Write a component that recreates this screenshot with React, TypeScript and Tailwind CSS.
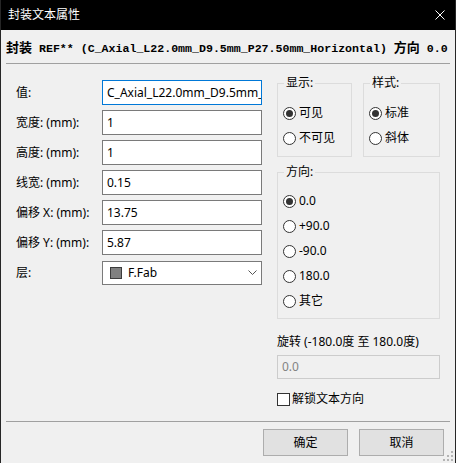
import type { ReactNode } from "react";

const uiFont = "font-['Noto_Sans','Noto_Sans_CJK_SC',sans-serif]";

const fields = [
  { label: "宽度: (mm):", value: "1" },
  { label: "高度: (mm):", value: "1" },
  { label: "线宽: (mm):", value: "0.15" },
  { label: "偏移 X: (mm):", value: "13.75" },
  { label: "偏移 Y: (mm):", value: "5.87" },
];

function Radio({ label, checked }: { label: string; checked?: boolean }) {
  return (
    <div className="flex h-4 items-center gap-[3px]">
      <span className="flex size-[13px] items-center justify-center rounded-full border border-[#333333] bg-white">
        {checked ? <span className="size-[7px] rounded-full bg-[#333333]" /> : null}
      </span>
      <span className="leading-4">{label}</span>
    </div>
  );
}

function Group({
  title,
  className,
  children,
}: {
  title: string;
  className: string;
  children: ReactNode;
}) {
  return (
    <div className={`relative border border-[#dcdcdc] ${className}`}>
      <span className="absolute -top-[9px] left-[6px] bg-[#f0f0f0] px-[2px] leading-4">
        {title}
      </span>
      {children}
    </div>
  );
}

function Field({ label, children }: { label: string; children: ReactNode }) {
  return (
    <div className="flex h-[25px] items-center">
      <span className="w-[86px] shrink-0 leading-4">{label}</span>
      {children}
    </div>
  );
}

function TextBox({ value, focused }: { value: string; focused?: boolean }) {
  return (
    <div
      className={`flex h-[25px] w-[160px] items-center overflow-hidden whitespace-nowrap border bg-white px-[4px] ${
        focused ? "border-[#0078d7]" : "border-[#7a7a7a]"
      }`}
    >
      {value}
    </div>
  );
}

function Button({ label }: { label: string }) {
  return (
    <button className="flex h-[27px] w-[85px] items-center justify-center border border-[#adadad] bg-[#e1e1e1]">
      {label}
    </button>
  );
}

export default function App() {
  return (
    <div
      className={`relative flex h-[463px] w-[456px] flex-col border-x border-[#262626] bg-[#f0f0f0] text-[12px] text-black ${uiFont}`}
    >
      {/* title bar */}
      <div className="flex h-[30px] shrink-0 items-center justify-between bg-black pl-[7px] pr-[10px] text-white">
        <span className="leading-4">封装文本属性</span>
        <svg width="10" height="10" viewBox="0 0 10 10" aria-hidden="true">
          <path d="M0.5 0.5 L9.5 9.5 M9.5 0.5 L0.5 9.5" stroke="white" strokeWidth="1" />
        </svg>
      </div>

      {/* footprint summary */}
      <div className="h-[33px] shrink-0 whitespace-pre pl-[5px] font-bold leading-[33px]">
        <span className="font-['Noto_Sans_CJK_SC',sans-serif] text-[13px]">封装</span>
        <span className="font-['Liberation_Mono',monospace] text-[11.6px]">
          {" REF** (C_Axial_L22.0mm_D9.5mm_P27.50mm_Horizontal) "}
        </span>
        <span className="font-['Noto_Sans_CJK_SC',sans-serif] text-[13px]">方向</span>
        <span className="font-['Liberation_Mono',monospace] text-[11.6px]">{" 0.0"}</span>
      </div>
      <div className="mx-[5px] h-px shrink-0 bg-[#a0a0a0]" />

      <div className="flex h-[357px] shrink-0 pl-[15px]">
        {/* left column */}
        <div className="flex w-[246px] flex-col gap-[5px] pt-[16px]">
          <Field label="值:">
            <TextBox value="C_Axial_L22.0mm_D9.5mm_P27.50mm_Horizontal" focused />
          </Field>
          {fields.map((f) => (
            <Field key={f.label} label={f.label}>
              <TextBox value={f.value} />
            </Field>
          ))}
          <Field label="层:">
            <div className="flex h-[24px] w-[160px] items-center border border-[#7a7a7a] bg-white pl-[7px] pr-[4px]">
              <span className="size-[12px] border border-[#3c3c3c] bg-[#808080]" />
              <span className="ml-[6px] flex-1">F.Fab</span>
              <svg width="9" height="5" viewBox="0 0 9 5" aria-hidden="true">
                <path d="M0.5 0.5 L4.5 4.5 L8.5 0.5" fill="none" stroke="#555" strokeWidth="1" />
              </svg>
            </div>
          </Field>
        </div>

        {/* right column */}
        <div className="ml-[15px] flex w-[163px] flex-col pt-[19px]">
          <div className="flex gap-[11px]">
            <Group title="显示:" className="flex h-[74px] w-[75px] flex-col gap-[9px] pl-[5px] pt-[21px]">
              <Radio label="可见" checked />
              <Radio label="不可见" />
            </Group>
            <Group title="样式:" className="flex h-[74px] w-[77px] flex-col gap-[9px] pl-[5px] pt-[21px]">
              <Radio label="标准" checked />
              <Radio label="斜体" />
            </Group>
          </div>
          <Group title="方向:" className="mt-[15px] flex h-[147px] flex-col gap-[9px] pl-[5px] pt-[20px]">
            <Radio label="0.0" checked />
            <Radio label="+90.0" />
            <Radio label="-90.0" />
            <Radio label="180.0" />
            <Radio label="其它" />
          </Group>
          <span className="mt-[15px] leading-4">旋转 (-180.0度 至 180.0度)</span>
          <div className="mt-[5px] flex h-[24px] items-center border border-[#cccccc] bg-[#f0f0f0] px-[4px] text-[#838383]">
            0.0
          </div>
          <div className="mt-[12px] flex h-4 items-center gap-[2px]">
            <span className="size-[13px] border border-[#333333] bg-white" />
            <span className="leading-4">解锁文本方向</span>
          </div>
        </div>
      </div>

      <div className="mx-[5px] h-px shrink-0 bg-[#a0a0a0]" />
      <div className="flex flex-1 justify-end gap-[11px] pr-[11px] pt-[7px]">
        <Button label="确定" />
        <Button label="取消" />
      </div>

      {/* resize grip */}
      <svg
        className="absolute bottom-[1px] right-[1px]"
        width="12"
        height="12"
        viewBox="0 0 12 12"
        aria-hidden="true"
      >
        {[
          [9, 1],
          [9, 5],
          [5, 5],
          [9, 9],
          [5, 9],
          [1, 9],
        ].map(([x, y]) => (
          <rect key={`${x}-${y}`} x={x} y={y} width="2" height="2" fill="#b4b4b4" />
        ))}
      </svg>
    </div>
  );
}
